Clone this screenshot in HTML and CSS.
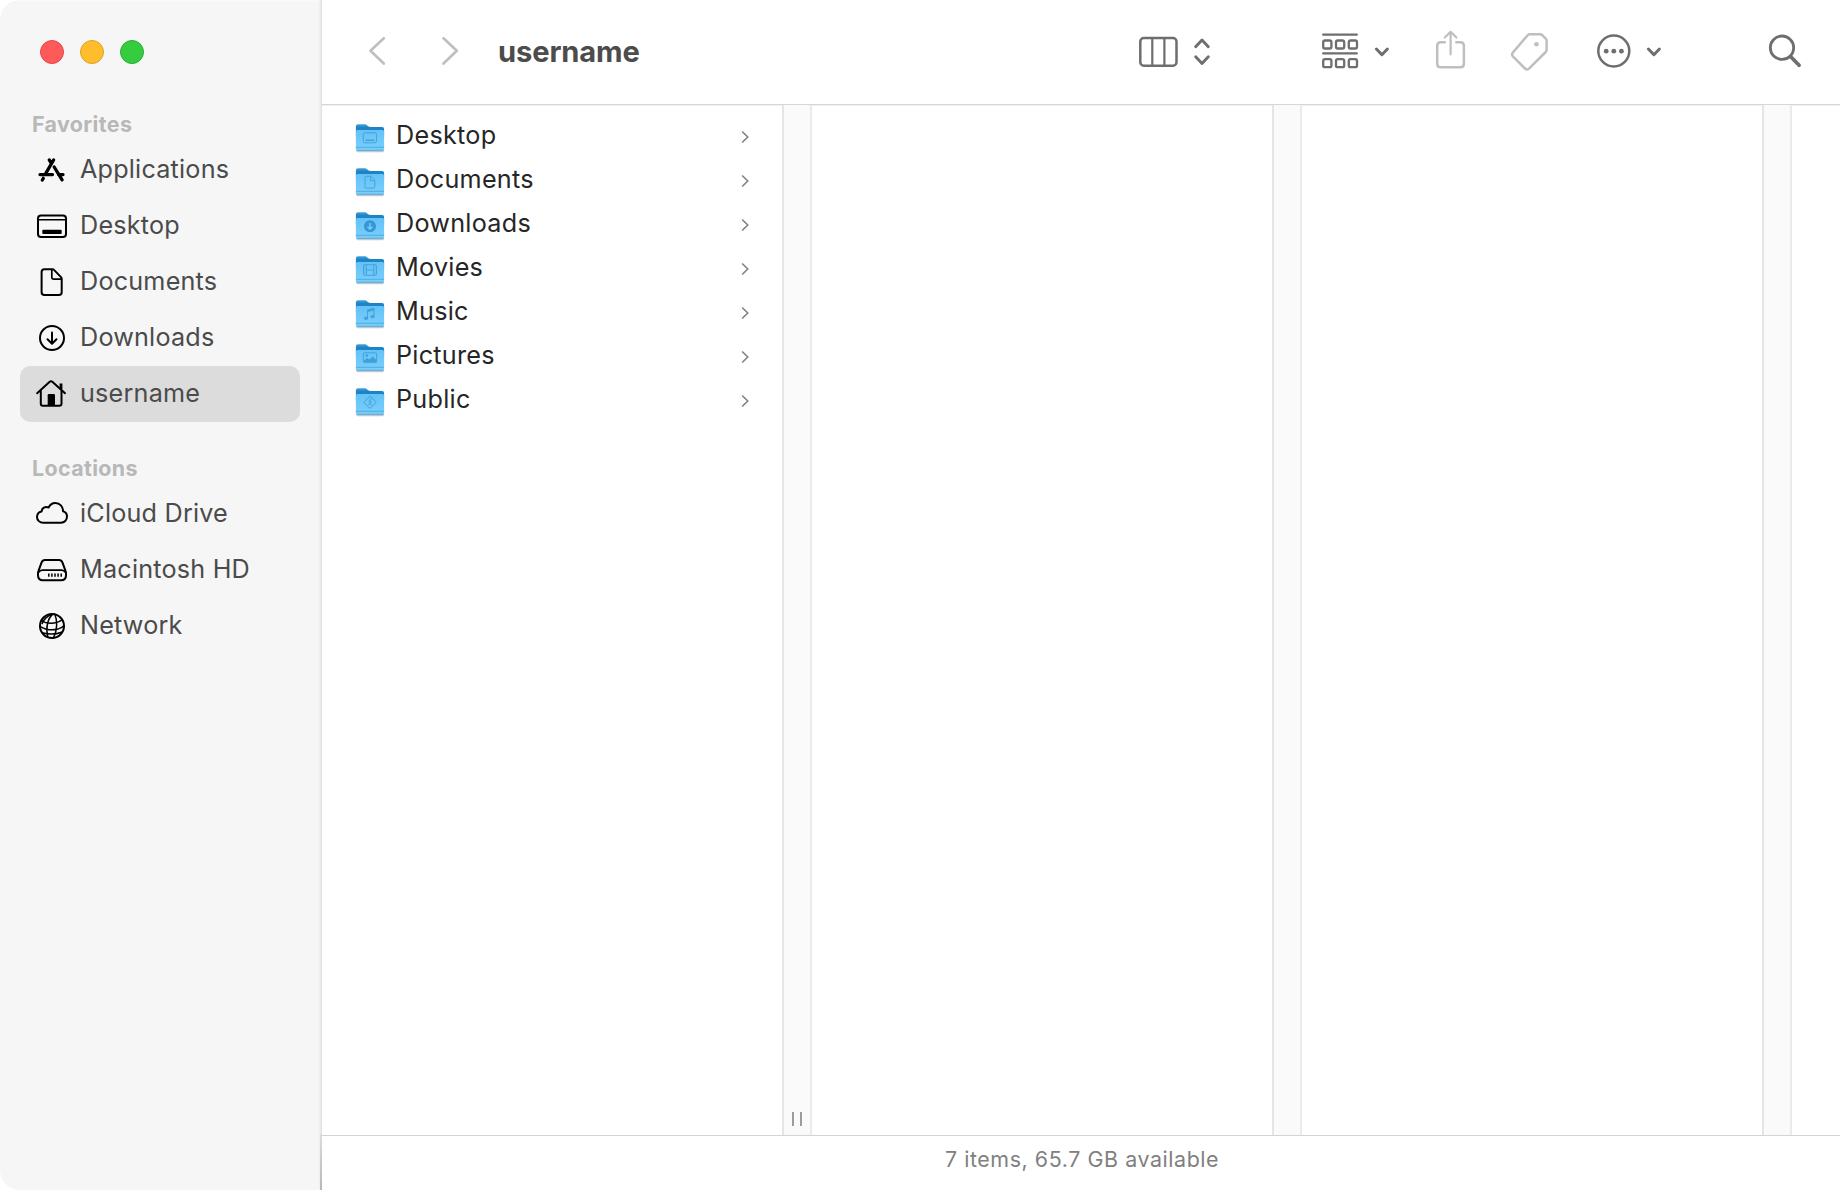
FILE: index.html
```html
<!DOCTYPE html>
<html lang="en">
<head>
<meta charset="utf-8">
<title>username</title>
<link rel="stylesheet" href="styles.css">
</head>
<body>
<svg class="defs" width="0" height="0" aria-hidden="true">
  <defs>
    <linearGradient id="folder-back" x1="0" y1="0" x2="0" y2="1">
      <stop offset="0" stop-color="#3fa4de"/><stop offset=".25" stop-color="#1e84c6"/><stop offset="1" stop-color="#1e84c6"/>
    </linearGradient>
    <linearGradient id="folder-front" x1="0" y1="0" x2="0" y2="1">
      <stop offset="0" stop-color="#64c2f6"/><stop offset="1" stop-color="#7acffd"/>
    </linearGradient>
    <symbol id="folder" viewBox="0 0 30 32">
      <path d="M2 28.6h26.4a.8.8 0 0 1 .5.8l-1 .9H2.4l-1-.9z" fill="#000" opacity=".22"/>
      <path d="M.9 4.3Q.9 2.2 3 2.2h6.2c1.6 0 2.2.5 3.1 1.3.9.9 1.6 1.4 3.2 1.4h11.6q2 0 2 2V15H.9z" fill="url(#folder-back)"/>
      <path d="M.9 9.6Q.9 8 2.6 8h24.8q1.7 0 1.7 1.6v17.6q0 1.6-1.7 1.6H2.6Q.9 28.8.9 27.2z" fill="url(#folder-front)"/>
      <path d="M.9 25.3h28.2" stroke="#4aa9e0" stroke-width=".9"/>
      <path d="M1.5 28.3h27" stroke="#4a9fd0" stroke-width=".8"/>
    </symbol>
    <symbol id="next" viewBox="0 0 10 16">
      <path d="M2.2 2.500l5.500 5.500-5.500 5.500" fill="none" stroke="#858585" stroke-width="1.700"/>
    </symbol>
    <symbol id="down" viewBox="0 0 24 48">
      <path d="M6.400 21l5.500 5.700 5.500-5.700" fill="none" stroke="#6e6e6e" stroke-width="3" stroke-linecap="round" stroke-linejoin="round"/>
    </symbol>
  </defs>
</svg>
<div class="window">
  <aside class="sidebar">
    <div class="lights"><span class="light red"></span><span class="light yellow"></span><span class="light green"></span></div>
    <h2 class="heading">Favorites</h2>
    <ul class="places">
      <li class="place"><svg class="place-icon" viewBox="0 0 36 36"><g stroke-width="3.300" fill="none"><path d="M19.600 8L11.800 21.400M15.300 8l2.200 3.400M6 22.600h12.500M20.200 15l7.900 12.800M24.500 22.600h4.500M9.300 26.300l-1 1.700"/></g></svg><span>Applications</span></li>
      <li class="place"><svg class="place-icon" viewBox="0 0 36 36"><rect x="4" y="7.400" width="28" height="21.600" rx="3"/><path d="M4 11.800h28" stroke-width="1.500"/><rect x="8.300" y="21.700" width="19.400" height="4.400" rx="1" fill="#000" stroke="none"/></svg><span>Desktop</span></li>
      <li class="place"><svg class="place-icon" viewBox="0 0 36 36"><path d="M10.400 5.300h8.200q.8 0 1.400.6l7 7.200q.7.700.7 1.600v13.500q0 2.800-2.800 2.800H10.400q-2.800 0-2.800-2.800V8.100q0-2.800 2.800-2.800z"/><path d="M17.800 5.800v7.500q0 1.900 1.900 1.900h7.700" stroke-width="1.700"/></svg><span>Documents</span></li>
      <li class="place"><svg class="place-icon" viewBox="0 0 36 36"><circle cx="18" cy="18" r="12"/><path d="M18 12.500v11M13.500 19.300l4.500 4.500 4.500-4.500"/></svg><span>Downloads</span></li>
      <li class="place selected"><svg class="place-icon" viewBox="0 0 36 36"><path d="M3.100 17.200L15.700 5.800q1.300-1.100 2.600 0L31 17.200"/><path d="M6.800 15v12.800q0 1.900 1.900 1.900h16.600q2.200 0 2.200-1.900V15"/><path d="M13.700 30V19.200q0-1.200 1.200-1.200h4.900q1.200 0 1.200 1.200V30z" fill="#000" stroke="none"/><path d="M27 7.500v6" stroke-width="2.800" stroke-linecap="butt"/></svg><span>username</span></li>
    </ul>
    <h2 class="heading">Locations</h2>
    <ul class="places">
      <li class="place"><svg class="place-icon" viewBox="0 0 36 36"><path d="M9.200 26.800C5.800 26.800 3 24.300 3 21c0-2.900 1.900-5 4.600-5.600.2-3.100 3.700-5.400 7-3.900C16 8.700 18.400 7 21.300 7c4.500 0 7.800 3.500 7.700 8.200 2.500.7 4 2.800 4 5.400 0 3.500-2.600 6.200-6.100 6.200z"/></svg><span>iCloud Drive</span></li>
      <li class="place"><svg class="place-icon" viewBox="0 0 36 36"><path d="M11 8h14q2.500 0 3.400 2.300l3 8.400q.6 1.500.6 2.900v1.600q0 5-5 5H9q-5 0-5-5v-1.600q0-1.400.6-2.900l3-8.400Q8.500 8 11 8z"/><path d="M4.500 20.300q1.300-2.100 4-2.100h19q2.700 0 4 2.100" stroke-width="1.700"/><path d="M14.800 21.500v3.300M17.900 21.500v3.300M21 21.500v3.300M24.100 21.500v3.300M27.200 21.500v3.300" stroke-width="1.500" stroke-linecap="butt"/></svg><span>Macintosh HD</span></li>
      <li class="place"><svg class="place-icon" viewBox="0 0 36 36"><circle cx="18" cy="18" r="12"/><g stroke-width="1.500"><path d="M18.800 6.200c-4.800 4-7.500 13-5 22.800M20.800 6.300c2.800 6 2.600 16-1.300 23.500M18.800 6.200c-4.800.8-9.300 5.200-10.600 9.300"/><path d="M7.500 12.500c5 3.800 14 4 20.500-.5M6 18.300c7 4.500 17 5 24-.5M9 25c4.500 1 13 1.500 18.500-.8"/></g></svg><span>Network</span></li>
    </ul>
  </aside>
  <main class="main">
    <header class="toolbar">
      <svg class="tool faint" width="24" height="48" viewBox="0 0 24 48"><path d="M18.800 10.300L5.500 22.800l13.300 12.700" stroke-width="2.700"/></svg>
      <svg class="tool faint forward" width="24" height="48" viewBox="0 0 24 48"><path d="M5.500 10.300l13.300 12.500L5.500 35.500" stroke-width="2.700"/></svg>
      <h1 class="title">username</h1>
      <svg class="tool view" width="44" height="48" viewBox="0 0 44 48"><rect x="4.300" y="10" width="36.200" height="27.700" rx="3.500"/><path d="M16.300 10v27.500M28.400 10v27.500" stroke-width="2.200"/></svg>
      <svg class="tool near" width="24" height="48" viewBox="0 0 24 48"><g stroke-width="2.900"><path d="M5.700 18.700l6.300-6.600 6.300 6.600M5.700 28.800l6.300 6.600 6.300-6.600"/></g></svg>
      <svg class="tool group" width="40" height="48" viewBox="0 0 40 48"><g stroke-width="2.300"><path d="M3.200 6.700h33.600M3.200 25.400h33.600"/><rect x="3.200" y="12.500" width="8.200" height="8" rx="1.800"/><rect x="16" y="12.500" width="8.200" height="8" rx="1.800"/><rect x="28.800" y="12.500" width="8.200" height="8" rx="1.800"/><rect x="3.200" y="31.200" width="8.200" height="8" rx="1.800"/><rect x="16" y="31.200" width="8.200" height="8" rx="1.800"/><rect x="28.800" y="31.200" width="8.200" height="8" rx="1.800"/></g></svg>
      <svg class="near" width="24" height="48"><use href="#down"/></svg>
      <svg class="tool faint share" width="36" height="48" viewBox="0 0 36 48"><path d="M12.800 14.300H8.800q-3.600 0-3.600 3.600v17.800q0 3.600 3.600 3.600h19.500q3.600 0 3.600-3.600V17.900q0-3.600-3.600-3.600h-4"/><path d="M18.600 26.300V4.500M12.800 9.500l5.800-5.700 5.800 5.700" stroke-width="2.200"/></svg>
      <svg class="tool faint tag" width="42" height="48" viewBox="0 0 42 48"><path d="M21.700 6.300h10.500q1.200 0 2 .8l3.500 3.500q.9.900.9 2v9.200q0 1.300-.9 2.200L21.300 40.400q-2.200 2.200-4.300.1L5.100 28.600q-2-2-.1-4.200L19.700 7.200q.8-.9 2-.9z"/><circle cx="28.400" cy="16.300" r="2.300" fill="#bfbfbf" stroke="none"/></svg>
      <svg class="tool action" width="40" height="48" viewBox="0 0 40 48"><circle cx="19.800" cy="23" r="15.500"/><g fill="#6e6e6e" stroke="none"><circle cx="12.200" cy="23.200" r="2.400"/><circle cx="19.800" cy="23.200" r="2.400"/><circle cx="27.400" cy="23.200" r="2.400"/></g></svg>
      <svg class="chevron" width="24" height="48"><use href="#down"/></svg>
      <svg class="tool search" width="40" height="48" viewBox="0 0 40 48"><circle cx="18" cy="19.700" r="11.700"/><path d="M26.800 28.800l8.300 8.500" stroke-width="3.700"/></svg>
    </header>
    <section class="browser">
      <ul class="column">
        <li class="item"><svg class="folder"><use href="#folder"/><g class="badge"><rect x="8.300" y="10.800" width="13.200" height="10" rx="1.500"/><path d="M10.500 18.300h9" stroke-width="1.500"/></g></svg><span class="name">Desktop</span><svg class="next"><use href="#next"/></svg></li>
        <li class="item"><svg class="folder"><use href="#folder"/><g class="badge"><path d="M11 10.300h5l3.800 4v6.500q0 1.300-1.300 1.300H11q-1 0-1-1.300v-9.200q0-1.300 1-1.300zM15.500 10.500v4.200h4"/></g></svg><span class="name">Documents</span><svg class="next"><use href="#next"/></svg></li>
        <li class="item"><svg class="folder"><use href="#folder"/><circle cx="15" cy="16.200" r="6" fill="#3697d3"/><path d="M15 13v6M12.500 16.800l2.500 2.500 2.500-2.500" fill="none" stroke="#74cbfb" stroke-width="1.500"/></svg><span class="name">Downloads</span><svg class="next"><use href="#next"/></svg></li>
        <li class="item"><svg class="folder"><use href="#folder"/><g class="badge"><rect x="8.500" y="10.700" width="13" height="10.600" rx="1"/><path d="M11.300 11v10M18.700 11v10M11.300 16h7.400"/><path d="M9.800 11v10M20.200 11v10" stroke-dasharray="1 1.200" stroke-width=".7"/></g></svg><span class="name">Movies</span><svg class="next"><use href="#next"/></svg></li>
        <li class="item"><svg class="folder"><use href="#folder"/><g class="badge"><path d="M12.500 20v-8l6.500-1.700v8"/><path d="M12.500 13l6.500-1.700" stroke-width="2"/><ellipse cx="11" cy="20.300" rx="1.600" ry="1.200" fill="#419fd9"/><ellipse cx="17.500" cy="18.700" rx="1.600" ry="1.200" fill="#419fd9"/></g></svg><span class="name">Music</span><svg class="next"><use href="#next"/></svg></li>
        <li class="item"><svg class="folder"><use href="#folder"/><g class="badge"><rect x="8.400" y="10.800" width="13.200" height="9.800" rx="1"/><path d="M9 20v-1.500l3.200-2.500 2 1.500 3.300-3 4 3.500V20z" fill="#419fd9" stroke="none"/><circle cx="11.800" cy="13.500" r="1.300" fill="#419fd9" stroke="none"/></g></svg><span class="name">Pictures</span><svg class="next"><use href="#next"/></svg></li>
        <li class="item"><svg class="folder"><use href="#folder"/><g class="badge"><rect x="10.500" y="11.800" width="9" height="9" rx="1" transform="rotate(45 15 16.300)"/><path d="M15.200 14.500v2.500l1.300 2.500M15 17l-1.700 2.500M13.300 15.800l1.900-1.100 1.600 1.300"/><circle cx="15.500" cy="13" r=".8" fill="#419fd9" stroke="none"/></g></svg><span class="name">Public</span><svg class="next"><use href="#next"/></svg></li>
      </ul>
      <div class="gutter"><span class="grip"></span></div>
      <div class="column"></div>
      <div class="gutter"></div>
      <div class="column"></div>
      <div class="gutter"></div>
      <div class="rest"></div>
    </section>
    <footer class="status">7 items, 65.7 GB available</footer>
  </main>
</div>
</body>
</html>
```
FILE: styles.css
```css
* { box-sizing: border-box; }
body { margin: 0; background: #fff; font-family: Inter, "Liberation Sans", sans-serif; }
ul { margin: 0; padding: 0; list-style: none; }
h1, h2 { margin: 0; }
svg { display: block; flex: none; }
.defs { position: absolute; }

.window { display: flex; width: 1840px; height: 1190px; overflow: hidden; background: #fff; border-radius: 20px; }

.sidebar {
  width: 322px; flex: none; padding-top: 40px;
  background:
    linear-gradient(#dcdcdc, #b8b8b8) right bottom / 2px 56px no-repeat,
    linear-gradient(to right, transparent 318px, #efefef 320px, #dcdcdc 322px),
    linear-gradient(#fbfbfb 0, #f6f6f6 2px);
}
.lights { display: flex; gap: 16px; padding-left: 40px; }
.light { width: 24px; height: 24px; border-radius: 50%; border: 1px solid; }
.red { background: #ff5a5a; border-color: #e2484b; }
.yellow { background: #ffbd2e; border-color: #dfa023; }
.green { background: #35cc40; border-color: #25b02f; }

.heading { padding: 0 0 0 32px; height: 36px; line-height: 36px; margin-top: 42px; font-size: 21.4px; font-weight: 700; letter-spacing: .38px; color: #b8b8b8; }
.places + .heading { margin-top: 28px; }
.places { padding: 0 22px 0 20px; }
.place { display: flex; align-items: center; gap: 10px; height: 56px; padding-left: 14px; border-radius: 10px; font-size: 25.2px; letter-spacing: .2px; color: #4b4b4b; }
.place span { padding-bottom: 2px; }
.selected { background: #dcdcdc; }
.place-icon { width: 36px; height: 36px; fill: none; stroke: #000; stroke-width: 2; stroke-linecap: round; stroke-linejoin: round; }

.main { flex: 1; min-width: 0; display: flex; flex-direction: column; }
.toolbar { display: flex; align-items: center; height: 104px; flex: none; padding: 0 36px 0 43px; }
.tool { fill: none; stroke: #6e6e6e; stroke-width: 2.5; stroke-linecap: round; stroke-linejoin: round; }
.faint { stroke: #bfbfbf; }
.forward { margin-left: 49px; }
.title { margin-left: 36px; font-size: 29.1px; line-height: 40px; font-weight: 700; letter-spacing: -.12px; color: #4c4c4c; }
.view { margin-left: auto; }
.near { margin-left: 10px; }
.group { margin-left: 106px; }
.share { margin-left: 38px; }
.tag { margin-left: 40px; }
.action { margin-left: 44px; }
.chevron { margin-left: 8px; }
.search { margin-left: 98px; stroke-width: 2.8; }

.browser { display: flex; flex: 1; min-height: 0; border-top: 1px solid #d6d6d6; box-shadow: inset 0 1px #f0f0f0; }
.column { width: 460px; flex: none; padding-top: 10px; }
.gutter { width: 30px; flex: none; display: flex; align-items: flex-end; justify-content: center; padding-bottom: 9px; background: #fafafa; border-left: 2px solid #e5e5e5; border-right: 2px solid #ebebeb; }
.grip { width: 10px; height: 14px; border-left: 2px solid #9c9c9c; border-right: 2px solid #9c9c9c; }
.rest { flex: 1; }

.item { display: flex; align-items: center; height: 44px; padding: 0 32px 0 33px; font-size: 25.2px; letter-spacing: .26px; color: #262626; }
.name { flex: 1; margin-left: 11px; padding-bottom: 5px; }
.folder { width: 30px; height: 32px; margin-top: 1px; }
.badge { fill: none; stroke: #419fd9; stroke-width: .9; }
.next { width: 10px; height: 16px; }

.status { height: 55px; flex: none; padding: 0 0 8px 2px; display: flex; align-items: center; justify-content: center; border-top: 1px solid #d4d4d4; font-size: 21.4px; letter-spacing: .58px; color: #808080; }
```
